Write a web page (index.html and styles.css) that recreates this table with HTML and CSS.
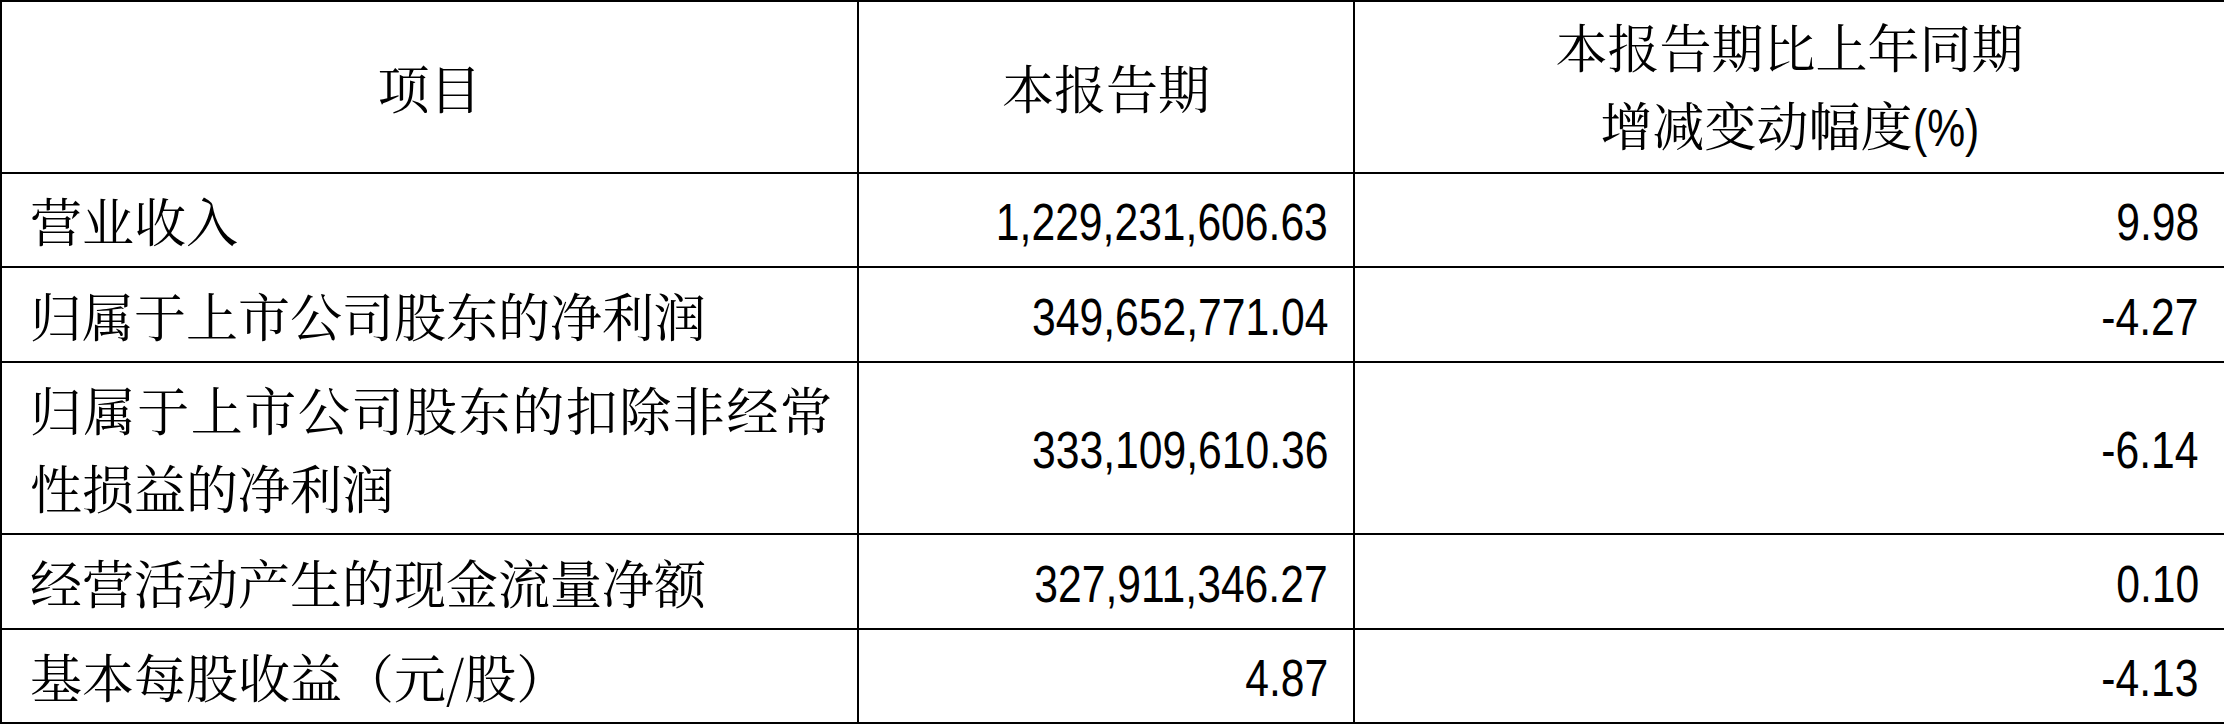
FILE: index.html
```html
<!DOCTYPE html>
<html lang="zh-CN">
<head>
<meta charset="utf-8">
<title>主要会计数据</title>
<link rel="stylesheet" href="styles.css">
</head>
<body>
<table class="fin">
  <colgroup>
    <col class="c-item">
    <col class="c-cur">
    <col class="c-chg">
  </colgroup>
  <tr class="r-head">
    <th>项目</th>
    <th>本报告期</th>
    <th>本报告期比上年同期<br>增减变动幅度<span class="pct">(%)</span></th>
  </tr>
  <tr class="r-std">
    <td class="label">营业收入</td>
    <td class="val"><span class="num">1,229,231,606.63</span></td>
    <td class="val"><span class="num">9.98</span></td>
  </tr>
  <tr class="r-std2">
    <td class="label">归属于上市公司股东的净利润</td>
    <td class="val"><span class="num">349,652,771.04</span></td>
    <td class="val"><span class="num">-4.27</span></td>
  </tr>
  <tr class="r-tall">
    <td class="label wrap">归属于上市公司股东的扣除非经常性损益的净利润</td>
    <td class="val"><span class="num">333,109,610.36</span></td>
    <td class="val"><span class="num">-6.14</span></td>
  </tr>
  <tr class="r-std2">
    <td class="label">经营活动产生的现金流量净额</td>
    <td class="val"><span class="num">327,911,346.27</span></td>
    <td class="val"><span class="num">0.10</span></td>
  </tr>
  <tr class="r-std">
    <td class="label">基本每股收益（元/股）</td>
    <td class="val"><span class="num">4.87</span></td>
    <td class="val"><span class="num">-4.13</span></td>
  </tr>
</table>
</body>
</html>
```

FILE: styles.css
```css
html, body {
  margin: 0;
  padding: 0;
  background: #ffffff;
}

body {
  width: 2224px;
  height: 725px;
  overflow: hidden;
  font-family: "Noto Serif CJK SC", "Noto Sans CJK SC", sans-serif;
  color: #000;
}

.fin {
  width: 2224px;
  border-collapse: collapse;
  table-layout: fixed;
}

.c-item { width: 857px; }
.c-cur  { width: 496px; }
.c-chg  { width: 871px; }

.fin th,
.fin td {
  border: 2px solid #000;
  padding: 0 25px 0 28px;
  font-size: 52px;
  font-weight: normal;
  line-height: 78px;
  vertical-align: middle;
  white-space: nowrap;
}

.fin th {
  text-align: center;
  padding: 0;
}

.r-head { height: 172px; }
.r-std  { height: 94px; }
.r-std2 { height: 95px; }
.r-tall { height: 172px; }

.label {
  text-align: left;
}

.label.wrap {
  white-space: normal;
  text-align: justify;
  text-justify: inter-character;
}

.val {
  text-align: right;
}

.num,
.pct {
  display: inline-block;
  font-family: "Liberation Sans", Arial, sans-serif;
  font-size: 52px;
  transform: scaleX(0.82);
}

.num {
  transform-origin: right center;
}

.pct {
  transform-origin: left center;
  margin-right: -15px;
}
```
